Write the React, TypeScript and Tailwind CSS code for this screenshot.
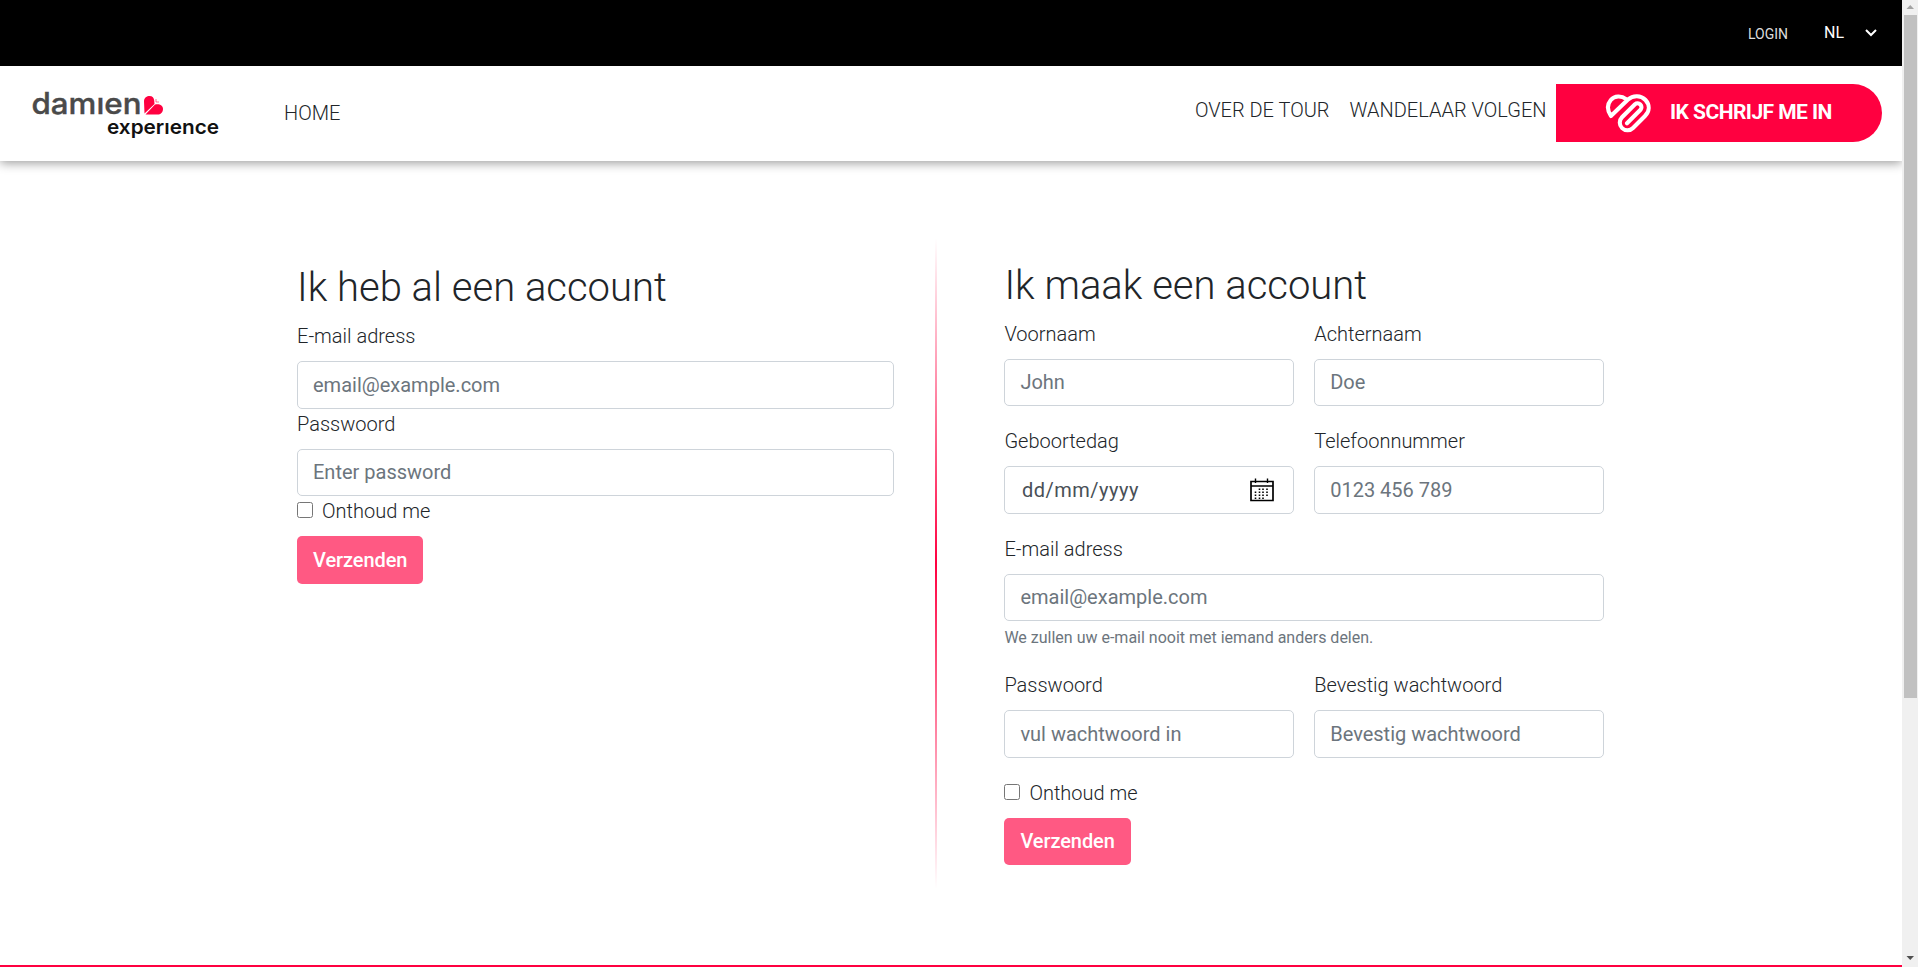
import React from 'react';

const inputClass =
  'block h-[47.5px] w-full rounded-[5px] border border-[#ced4da] bg-white px-[15px] text-[20px] leading-[30px] font-normal text-[#495057] placeholder:text-[#6c757d] placeholder:opacity-100';

function Field({ label, type = 'text', placeholder, note }: { label: string; type?: string; placeholder: string; note?: string }) {
  return (
    <div className="min-w-0 flex-1">
      <label className="mb-[10px] block">{label}</label>
      <input type={type} placeholder={placeholder} className={inputClass} />
      {note && <small className="mt-[5px] block text-[16px] leading-[24px] font-normal text-[#6c757d]">{note}</small>}
    </div>
  );
}

function DateField() {
  return (
    <div className="min-w-0 flex-1">
      <label className="mb-[10px] block">Geboortedag</label>
      <div className="flex h-[47.5px] items-center justify-between rounded-[5px] border border-[#ced4da] pr-[18px] pl-[16.5px] font-normal text-[#495057]">
        <span className="tracking-[0.5px]">dd/mm/yyyy</span>
        <svg width="26" height="24" viewBox="0 0 26 24" fill="none" stroke="#000">
          <path d="M2 3.500H24V22.500H2Z M2 8H24" strokeWidth="1.7" />
          <path d="M6.500 0.500V5 M18.500 0.500V5" strokeWidth="1.4" />
          <path d="M10.500 10.500V21 M14 10.500V21 M18 10.500V18 M6.500 13.500V21" strokeDasharray="1.600 1.400" strokeWidth="1.6" />
        </svg>
      </div>
    </div>
  );
}

function Remember() {
  return (
    <label className="mb-[10px] flex h-[30px] items-center">
      <input type="checkbox" className="mr-[9px] mb-[2px] size-4" />
      Onthoud me
    </label>
  );
}

function Submit() {
  return (
    <button className="block h-[47.5px] rounded-[5px] bg-[#ff5983] px-[16px] text-[20px] leading-[30px] font-medium tracking-[-0.08px] text-white">
      Verzenden
    </button>
  );
}

function Logo() {
  return (
    <svg width="192" height="56" viewBox="0 0 192 56" className="block font-['Inter','Liberation_Sans',sans-serif]">
      <text x="-0.5" y="28" fontSize="29.5" fontWeight="500" fill="#4a4a4a" stroke="#4a4a4a" strokeWidth="0.4" textLength="110" lengthAdjust="spacingAndGlyphs">damıen</text>
      <text x="75" y="47.500" fontSize="20" fontWeight="600" fill="#111" textLength="112" lengthAdjust="spacingAndGlyphs">experıence</text>
      <g transform="translate(112 10)">
        <path d="M0.500 17.500L0 5.500C0 1.500 3 0 5.500 0C8.500 0 10 2 10.200 4.500L10.500 8Z" fill="#ff0040" />
        <path d="M1.500 18.500L11 8.500C15.500 7.500 19 9.500 19 13C19 16.500 16.500 18.500 13.500 18.500Z" fill="#ff0040" />
        <path d="M12 3V6H15" stroke="#ff0040" strokeWidth="0.8" fill="none" opacity="0.7" />
      </g>
    </svg>
  );
}

function HeartMark() {
  return (
    <svg width="50" height="42" viewBox="0 0 50 42" fill="none" stroke="#fff" strokeWidth="4.1" strokeLinejoin="round" strokeLinecap="round">
      <path d="M22 7C17.500 3.400 10.500 3.500 6.800 8C3 12.500 3.300 18.500 6.900 24L24 7.600C29 3 37 3.200 41.500 8C46 13 45.600 19.300 41 24L29 36A7.700 7.700 0 0 1 18 25.200L31 12.300A3.900 3.900 0 0 1 36.500 17.800L23 31.300" />
    </svg>
  );
}

export default function App() {
  return (
    <div className="flex h-[967px] w-full overflow-hidden bg-white font-['Roboto',sans-serif] text-[20px] leading-[30px] font-light text-[#212529]">
      <div className="flex min-w-0 flex-1 flex-col">
        <header className="flex h-[66px] shrink-0 items-center justify-end bg-black pr-[25px] font-normal text-white">
          <span className="mt-[2px] mr-[36px] text-[14px] text-[#ddd]">LOGIN</span>
          <span className="mr-[21px] text-[16px]">NL</span>
          <svg width="12" height="8" viewBox="0 0 12 8" fill="none" stroke="#fff" strokeWidth="2"><path d="M1 1L6 6L11 1" /></svg>
        </header>
        <nav className="flex h-[95px] shrink-0 items-center bg-white pr-5 pl-8 shadow-[0_2px_10px_rgba(0,0,0,0.4)]">
          <Logo />
          <a className="mb-[2px] ml-[60px]">HOME</a>
          <a className="mb-[8px] ml-auto">OVER DE TOUR</a>
          <a className="mb-[8px] ml-5">WANDELAAR VOLGEN</a>
          <button className="mb-[1px] ml-[9.5px] flex h-[58px] w-[326px] items-center rounded-r-full bg-[#ff0040] pl-[48px] text-[21px] font-bold tracking-[-0.55px] text-white">
            <HeartMark />
            <span className="mb-[2px] ml-[16px] whitespace-nowrap">IK SCHRIJF ME IN</span>
          </button>
        </nav>
        <main className="flex min-h-0 flex-1 items-start pl-[297px]">
          <form className="w-[597px] pt-[103px]">
            <h1 className="mb-[9px] text-[40px] leading-[48px] font-light">Ik heb al een account</h1>
            <Field label="E-mail adress" placeholder="email@example.com" />
            <Field label="Passwoord" placeholder="Enter password" />
            <Remember />
            <Submit />
          </form>
          <div className="mt-[77px] ml-[41px] h-[651px] w-[2px] bg-linear-to-b from-[#ff004000] via-[#ff0040] to-[#ff004000]" />
          <form className="ml-[67.4px] w-[599.6px] pt-[100.6px]">
            <h1 className="mb-[9px] text-[40px] leading-[48px] font-light">Ik maak een account</h1>
            <div className="mb-5 flex gap-5">
              <Field label="Voornaam" placeholder="John" />
              <Field label="Achternaam" placeholder="Doe" />
            </div>
            <div className="mb-5 flex gap-5">
              <DateField />
              <Field label="Telefoonnummer" placeholder="0123 456 789" />
            </div>
            <div className="mb-5 flex">
              <Field label="E-mail adress" placeholder="email@example.com" note="We zullen uw e-mail nooit met iemand anders delen." />
            </div>
            <div className="mb-5 flex gap-5">
              <Field label="Passwoord" placeholder="vul wachtwoord in" />
              <Field label="Bevestig wachtwoord" placeholder="Bevestig wachtwoord" />
            </div>
            <Remember />
            <Submit />
          </form>
        </main>
        <footer className="h-[2px] shrink-0 bg-[#ff0040]" />
      </div>
      <aside className="flex w-4 shrink-0 flex-col items-center bg-[#f0f0f0]">
        <svg width="16" height="15" viewBox="0 0 16 15"><path d="M4.500 9H12L8.250 5Z" fill="#a3a3a3" /></svg>
        <div className="h-[683px] w-[13px] bg-[#c1c1c1]" />
        <svg className="mt-auto" width="16" height="15" viewBox="0 0 16 15"><path d="M4.500 4H12L8.250 8Z" fill="#505050" /></svg>
      </aside>
    </div>
  );
}
